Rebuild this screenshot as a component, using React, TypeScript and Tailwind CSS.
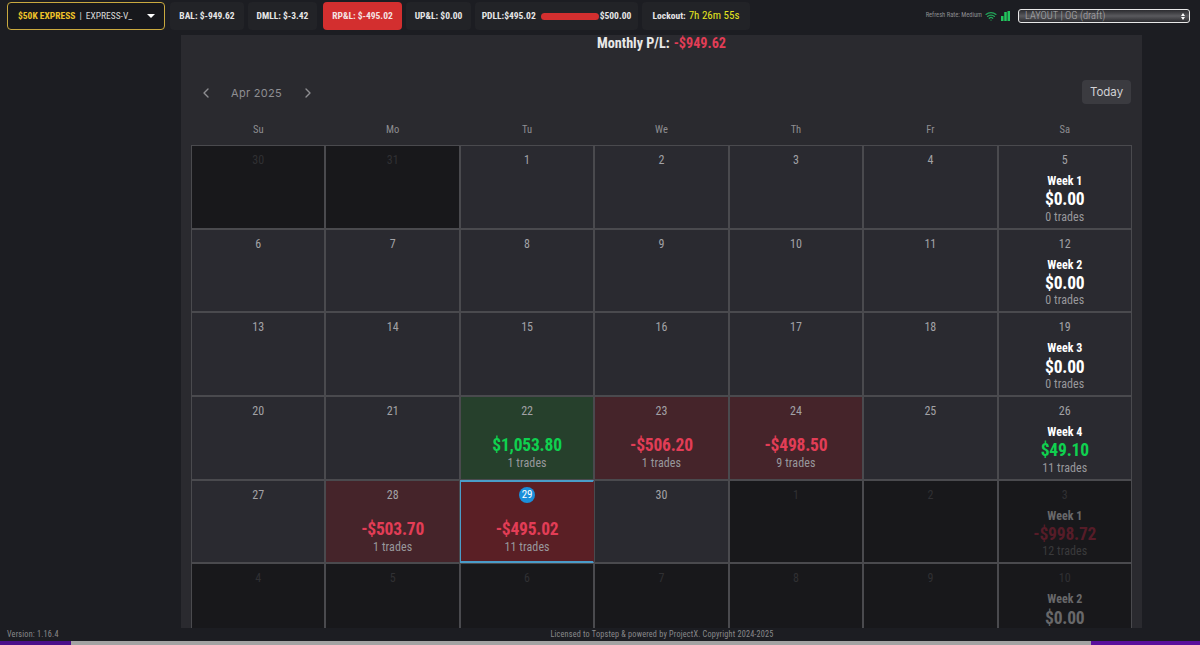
import { ChevronLeft, ChevronRight, Wifi } from "lucide-react"

type Cell = {
  day: number
  out?: boolean
  tone?: "win" | "loss" | "today"
  amount?: string
  trades?: string
  week?: string
}

const cells: Cell[] = [
  { day: 30, out: true },
  { day: 31, out: true },
  { day: 1 },
  { day: 2 },
  { day: 3 },
  { day: 4 },
  { day: 5, week: "Week 1", amount: "$0.00", trades: "0 trades" },
  { day: 6 },
  { day: 7 },
  { day: 8 },
  { day: 9 },
  { day: 10 },
  { day: 11 },
  { day: 12, week: "Week 2", amount: "$0.00", trades: "0 trades" },
  { day: 13 },
  { day: 14 },
  { day: 15 },
  { day: 16 },
  { day: 17 },
  { day: 18 },
  { day: 19, week: "Week 3", amount: "$0.00", trades: "0 trades" },
  { day: 20 },
  { day: 21 },
  { day: 22, tone: "win", amount: "$1,053.80", trades: "1 trades" },
  { day: 23, tone: "loss", amount: "-$506.20", trades: "1 trades" },
  { day: 24, tone: "loss", amount: "-$498.50", trades: "9 trades" },
  { day: 25 },
  { day: 26, week: "Week 4", amount: "$49.10", trades: "11 trades" },
  { day: 27 },
  { day: 28, tone: "loss", amount: "-$503.70", trades: "1 trades" },
  { day: 29, tone: "today", amount: "-$495.02", trades: "11 trades" },
  { day: 30 },
  { day: 1, out: true },
  { day: 2, out: true },
  { day: 3, out: true, week: "Week 1", amount: "-$998.72", trades: "12 trades" },
  { day: 4, out: true },
  { day: 5, out: true },
  { day: 6, out: true },
  { day: 7, out: true },
  { day: 8, out: true },
  { day: 9, out: true },
  { day: 10, out: true, week: "Week 2", amount: "$0.00" },
]

function Chip({ children, className = "" }: { children: React.ReactNode; className?: string }) {
  return (
    <div className={`flex h-[28px] items-center whitespace-nowrap rounded bg-[#222327] text-[9.5px] font-bold text-[#e6e6e6] ${className}`}>
      {children}
    </div>
  )
}

function DayCell({ cell }: { cell: Cell }) {
  let bg = "bg-[#2a2a30] border-[#4a4a4e] pt-[6px]"
  if (cell.out) bg = "bg-[#18181b] border-[#4a4a4e] pt-[6px]"
  if (cell.tone === "win") bg = "bg-[#26402c] border-[#4a4a4e] pt-[6px]"
  if (cell.tone === "loss") bg = "bg-[#45242a] border-[#4a4a4e] pt-[6px]"
  if (cell.tone === "today") bg = "bg-[#5a1f25] border-y-2 border-y-[#4a9cc8] border-l-[#4a9cc8] border-r-[#5a1f25] pt-[5px]"

  let amountColor = "text-[#e23d56]"
  if (cell.tone === "win") amountColor = "text-[#0fd14f]"
  if (cell.week && !cell.out) {
    amountColor = cell.amount === "$0.00" ? "text-white" : "text-[#0fd14f]"
  }
  if (cell.out) amountColor = cell.amount === "$0.00" ? "text-[#68686a]" : "text-[#561c28]"

  return (
    <div className={`flex flex-col items-center border ${bg}`}>
      {cell.tone === "today" ? (
        <div className="flex h-[16px] w-[16px] items-center justify-center rounded-full bg-[#1b8fdb] text-[11px] text-white">
          {cell.day}
        </div>
      ) : (
        <div className={`h-[16px] text-[12px] leading-[16px] ${cell.out ? "text-[#303033]" : "text-[#a2a2a6]"}`}>
          {cell.day}
        </div>
      )}
      {cell.week && (
        <div className={`mt-[6px] h-[14px] text-[12px] font-bold leading-[14px] ${cell.out ? "text-[#68686a]" : "text-white"}`}>
          {cell.week}
        </div>
      )}
      {cell.amount && (
        <div className={`flex h-[20px] items-center text-[17.5px] font-bold tracking-[-0.2px] ${cell.week ? "mt-[1.5px]" : "mt-[16px]"} ${amountColor}`}>
          {cell.amount}
        </div>
      )}
      {cell.trades && (
        <div className={`h-[14px] text-[12px] leading-[14px] tracking-[0.1px] ${cell.week || !cell.tone ? "" : "mt-[1px]"} ${cell.out ? "text-[#3a3a3c]" : "text-[#98989c]"}`}>
          {cell.trades}
        </div>
      )}
    </div>
  )
}

export default function App() {
  return (
    <div className="flex h-[645px] w-[1200px] flex-col overflow-hidden bg-[#1c1d22] font-['Roboto',sans-serif] font-stretch-condensed">
      {/* top bar */}
      <header className="flex h-[35px] shrink-0 items-start pl-[7px] pt-[2px]">
        <div className="flex h-[28px] w-[158px] items-center whitespace-nowrap rounded border border-[#c9a93f] bg-[#17181c] pl-[10px] text-[9.5px]">
          <span className="font-bold text-[#eec32a]">$50K EXPRESS</span>
          <span className="ml-[4px] text-[#d8d8d8]">|</span>
          <span className="ml-[4px] text-[#d8d8d8]">EXPRESS-V_</span>
          <span className="ml-auto mr-[9px] h-0 w-0 border-x-[4px] border-t-[4px] border-x-transparent border-t-white" />
        </div>
        <div className="ml-[5px] flex gap-[4px]">
          <Chip className="w-[74px] justify-center">BAL: $-949.62</Chip>
          <Chip className="w-[69px] justify-center">DMLL: $-3.42</Chip>
          <Chip className="ml-[2px] w-[79px] justify-center bg-[#d32f2f] text-[#f5e3e3]">RP&amp;L: $-495.02</Chip>
          <Chip className="w-[65px] justify-center">UP&amp;L: $0.00</Chip>
          <Chip className="w-[163px] justify-center">
            <span>PDLL:$495.02</span>
            <span className="ml-[5px] mr-[1px] h-[7px] w-[58px] rounded-full bg-[#d32f2f]" />
            <span>$500.00</span>
          </Chip>
          <Chip className="w-[108px] justify-center">
            <span>Lockout:</span>
            <span className="ml-[3px] text-[11px] font-normal text-[#e6e61e]">7h 26m 55s</span>
          </Chip>
        </div>
        <div className="ml-auto mr-[10px] mt-[7px] flex items-center">
          <span className="text-[6.5px] text-[#8d8d90]">Refresh Rate: Medium</span>
          <Wifi className="ml-[3px] h-[12px] w-[12px] text-[#22a559]" strokeWidth={2.5} />
          <svg className="ml-[4px] h-[10px] w-[9px]" viewBox="0 0 9 10">
            <rect x="0" y="5" width="2.5" height="5" fill="#22c55e" />
            <rect x="3.25" y="1" width="2.5" height="9" fill="#22c55e" />
            <rect x="6.5" y="0" width="2.5" height="10" fill="#22c55e" />
          </svg>
          <div className="ml-[8px] flex h-[14px] w-[172px] items-center rounded-[3px] border border-[#e8e8e8] bg-gradient-to-b from-[#2c2c30] via-[#5a5a5e] to-[#2c2c30] pl-[6px] pr-[4px] text-[10.5px] font-light text-[#b0b0b2]">
            <span>LAYOUT | OG (draft)</span>
            <span className="ml-auto flex flex-col gap-[1px]">
              <span className="h-0 w-0 border-x-[2.5px] border-b-[3px] border-x-transparent border-b-white" />
              <span className="h-0 w-0 border-x-[2.5px] border-t-[3px] border-x-transparent border-t-white" />
            </span>
          </div>
        </div>
      </header>

      {/* calendar panel */}
      <main className="min-h-0 flex-1 overflow-hidden pl-[181px]">
        <div className="h-full w-[961px] bg-[#2a2a2f] px-[10px]">
          <div className="flex h-[17px] items-center justify-center text-[14.2px] font-bold text-[#e8e8e8]">
            Monthly P/L:<span className="ml-[4px] text-[#e23d56]">-$949.62</span>
          </div>
          <div className="mt-[28px] flex h-[26px] items-center font-['Inter',sans-serif] font-stretch-normal text-[#8e8e92]">
            <ChevronLeft className="ml-[7px] h-[16px] w-[16px]" />
            <span className="ml-[17px] text-[11px] tracking-[0.3px]">Apr 2025</span>
            <ChevronRight className="ml-[18px] h-[16px] w-[16px]" />
            <div className="ml-auto mb-[2px] mr-px flex h-[24px] w-[49px] items-center justify-center rounded bg-[#3b3b40] pt-[1px] text-[11.5px] text-[#d2d2d4]">
              Today
            </div>
          </div>
          <div className="mt-[12px] grid h-[24px] grid-cols-7 text-center text-[10.5px] leading-[24px] text-[#8e8e92]">
            {["Su", "Mo", "Tu", "We", "Th", "Fr", "Sa"].map((d) => (
              <div key={d}>{d}</div>
            ))}
          </div>
          <div className="mt-[3px] grid grid-cols-7 auto-rows-[83.7px]">
            {cells.map((c, i) => (
              <DayCell key={i} cell={c} />
            ))}
          </div>
        </div>
      </main>

      {/* footer */}
      <footer className="relative flex h-[13px] shrink-0 items-center justify-center pl-[124px] text-[8.2px] tracking-[0.2px] text-[#8a8a8c]">
        <span className="absolute left-[7px]">Version: 1.16.4</span>
        <span>Licensed to Topstep &amp; powered by ProjectX. Copyright 2024-2025</span>
      </footer>
      <div className="flex h-[4px] shrink-0">
        <div className="w-[71px] bg-[#4b0f8a]" />
        <div className="flex-1 bg-[#a3a3a3]" />
        <div className="w-[109px] bg-[#5a0f9c]" />
      </div>
    </div>
  )
}
